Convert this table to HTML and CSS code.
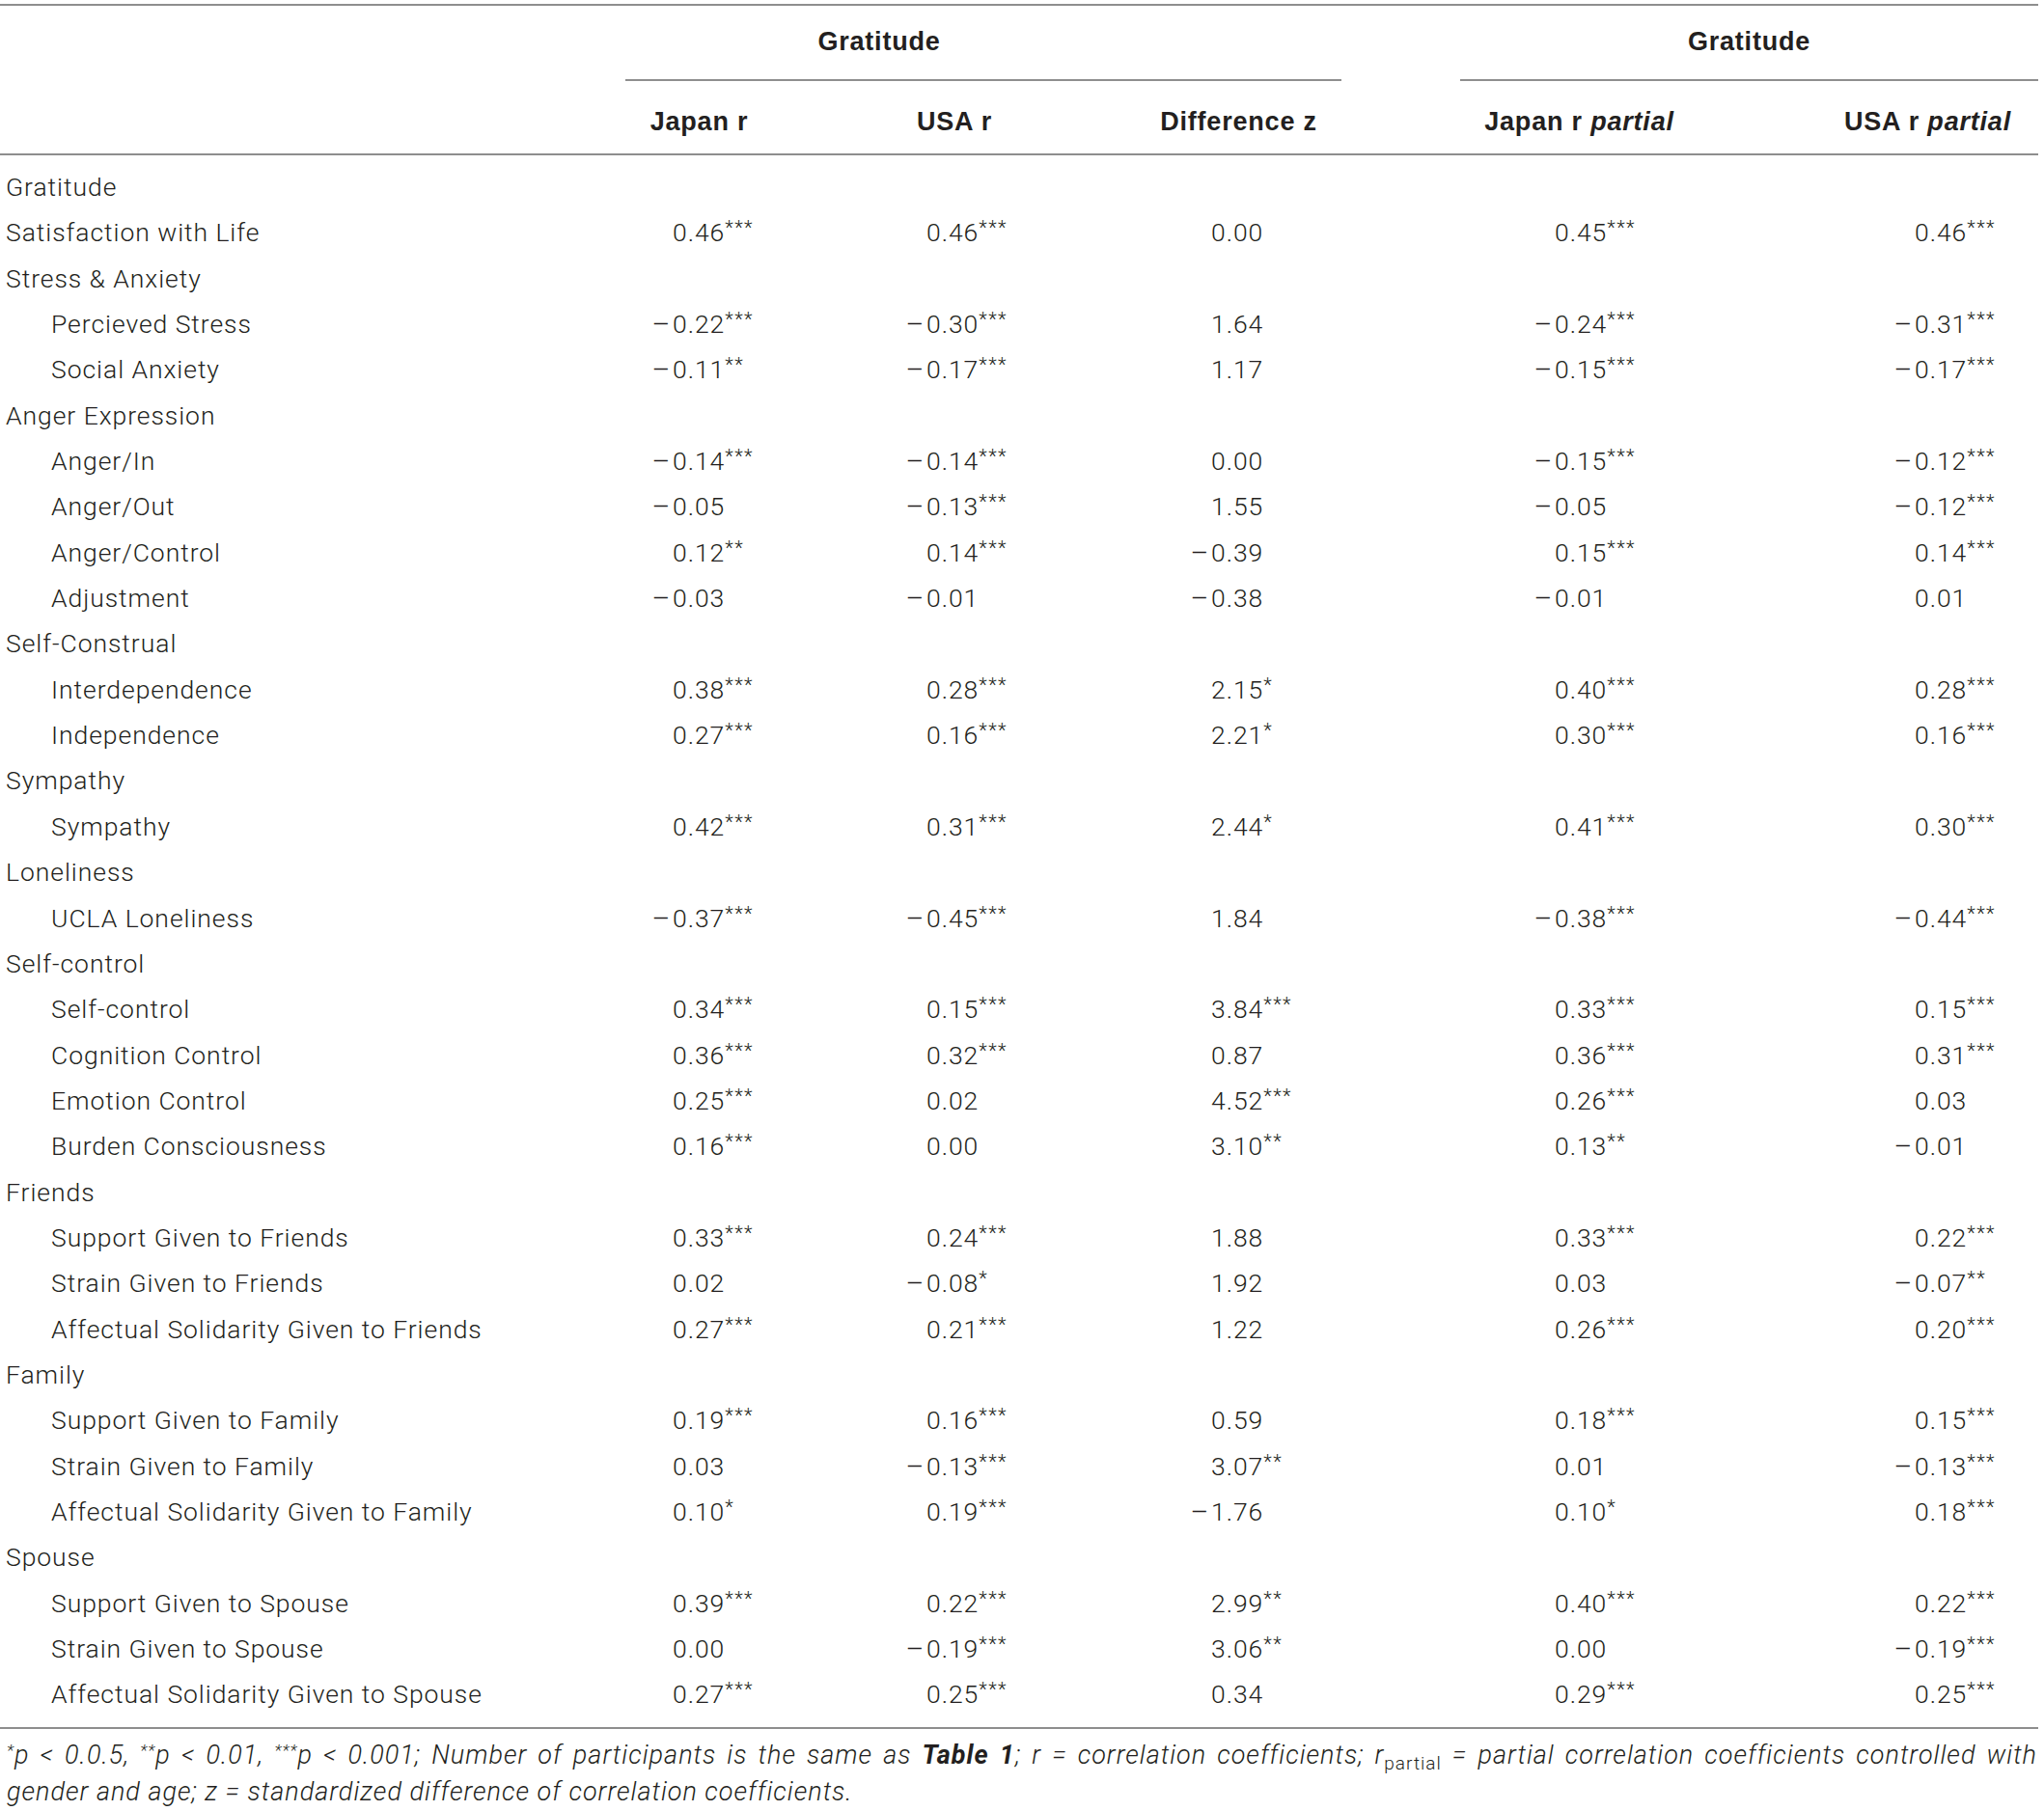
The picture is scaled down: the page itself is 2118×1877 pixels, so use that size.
FILE: index.html
```html
<!DOCTYPE html>
<html lang="en">
<head>
<meta charset="utf-8">
<title>Gratitude correlations</title>
<link rel="stylesheet" href="styles.css">
</head>
<body>
<div class="wrap">
<table class="tbl">
<colgroup>
<col class="c1"><col class="c2"><col class="c3"><col class="c4"><col class="c5"><col class="c6">
</colgroup>
<thead>
<tr class="hg">
<th></th>
<th colspan="3"><div class="gl g1">Gratitude</div></th>
<th colspan="2"><div class="gl g2">Gratitude</div></th>
</tr>
<tr class="hc">
<th></th>
<th>Japan r</th>
<th>USA r</th>
<th>Difference z</th>
<th>Japan r <i>partial</i></th>
<th>USA r <i>partial</i></th>
</tr>
</thead>
<tbody>
<tr class="first"><td class="lab">Gratitude</td><td></td><td></td><td></td><td></td><td></td></tr>
<tr><td class="lab">Satisfaction with Life</td><td><span class="m"></span>0.46<sup>***</sup></td><td><span class="m"></span>0.46<sup>***</sup></td><td><span class="m"></span>0.00</td><td><span class="m"></span>0.45<sup>***</sup></td><td><span class="m"></span>0.46<sup>***</sup></td></tr>
<tr><td class="lab">Stress &amp; Anxiety</td><td></td><td></td><td></td><td></td><td></td></tr>
<tr><td class="lab sub">Percieved Stress</td><td><span class="m">−</span>0.22<sup>***</sup></td><td><span class="m">−</span>0.30<sup>***</sup></td><td><span class="m"></span>1.64</td><td><span class="m">−</span>0.24<sup>***</sup></td><td><span class="m">−</span>0.31<sup>***</sup></td></tr>
<tr><td class="lab sub">Social Anxiety</td><td><span class="m">−</span>0.11<sup>**</sup></td><td><span class="m">−</span>0.17<sup>***</sup></td><td><span class="m"></span>1.17</td><td><span class="m">−</span>0.15<sup>***</sup></td><td><span class="m">−</span>0.17<sup>***</sup></td></tr>
<tr><td class="lab">Anger Expression</td><td></td><td></td><td></td><td></td><td></td></tr>
<tr><td class="lab sub">Anger/In</td><td><span class="m">−</span>0.14<sup>***</sup></td><td><span class="m">−</span>0.14<sup>***</sup></td><td><span class="m"></span>0.00</td><td><span class="m">−</span>0.15<sup>***</sup></td><td><span class="m">−</span>0.12<sup>***</sup></td></tr>
<tr><td class="lab sub">Anger/Out</td><td><span class="m">−</span>0.05</td><td><span class="m">−</span>0.13<sup>***</sup></td><td><span class="m"></span>1.55</td><td><span class="m">−</span>0.05</td><td><span class="m">−</span>0.12<sup>***</sup></td></tr>
<tr><td class="lab sub">Anger/Control</td><td><span class="m"></span>0.12<sup>**</sup></td><td><span class="m"></span>0.14<sup>***</sup></td><td><span class="m">−</span>0.39</td><td><span class="m"></span>0.15<sup>***</sup></td><td><span class="m"></span>0.14<sup>***</sup></td></tr>
<tr><td class="lab sub">Adjustment</td><td><span class="m">−</span>0.03</td><td><span class="m">−</span>0.01</td><td><span class="m">−</span>0.38</td><td><span class="m">−</span>0.01</td><td><span class="m"></span>0.01</td></tr>
<tr><td class="lab">Self-Construal</td><td></td><td></td><td></td><td></td><td></td></tr>
<tr><td class="lab sub">Interdependence</td><td><span class="m"></span>0.38<sup>***</sup></td><td><span class="m"></span>0.28<sup>***</sup></td><td><span class="m"></span>2.15<sup>*</sup></td><td><span class="m"></span>0.40<sup>***</sup></td><td><span class="m"></span>0.28<sup>***</sup></td></tr>
<tr><td class="lab sub">Independence</td><td><span class="m"></span>0.27<sup>***</sup></td><td><span class="m"></span>0.16<sup>***</sup></td><td><span class="m"></span>2.21<sup>*</sup></td><td><span class="m"></span>0.30<sup>***</sup></td><td><span class="m"></span>0.16<sup>***</sup></td></tr>
<tr><td class="lab">Sympathy</td><td></td><td></td><td></td><td></td><td></td></tr>
<tr><td class="lab sub">Sympathy</td><td><span class="m"></span>0.42<sup>***</sup></td><td><span class="m"></span>0.31<sup>***</sup></td><td><span class="m"></span>2.44<sup>*</sup></td><td><span class="m"></span>0.41<sup>***</sup></td><td><span class="m"></span>0.30<sup>***</sup></td></tr>
<tr><td class="lab">Loneliness</td><td></td><td></td><td></td><td></td><td></td></tr>
<tr><td class="lab sub">UCLA Loneliness</td><td><span class="m">−</span>0.37<sup>***</sup></td><td><span class="m">−</span>0.45<sup>***</sup></td><td><span class="m"></span>1.84</td><td><span class="m">−</span>0.38<sup>***</sup></td><td><span class="m">−</span>0.44<sup>***</sup></td></tr>
<tr><td class="lab">Self-control</td><td></td><td></td><td></td><td></td><td></td></tr>
<tr><td class="lab sub">Self-control</td><td><span class="m"></span>0.34<sup>***</sup></td><td><span class="m"></span>0.15<sup>***</sup></td><td><span class="m"></span>3.84<sup>***</sup></td><td><span class="m"></span>0.33<sup>***</sup></td><td><span class="m"></span>0.15<sup>***</sup></td></tr>
<tr><td class="lab sub">Cognition Control</td><td><span class="m"></span>0.36<sup>***</sup></td><td><span class="m"></span>0.32<sup>***</sup></td><td><span class="m"></span>0.87</td><td><span class="m"></span>0.36<sup>***</sup></td><td><span class="m"></span>0.31<sup>***</sup></td></tr>
<tr><td class="lab sub">Emotion Control</td><td><span class="m"></span>0.25<sup>***</sup></td><td><span class="m"></span>0.02</td><td><span class="m"></span>4.52<sup>***</sup></td><td><span class="m"></span>0.26<sup>***</sup></td><td><span class="m"></span>0.03</td></tr>
<tr><td class="lab sub">Burden Consciousness</td><td><span class="m"></span>0.16<sup>***</sup></td><td><span class="m"></span>0.00</td><td><span class="m"></span>3.10<sup>**</sup></td><td><span class="m"></span>0.13<sup>**</sup></td><td><span class="m">−</span>0.01</td></tr>
<tr><td class="lab">Friends</td><td></td><td></td><td></td><td></td><td></td></tr>
<tr><td class="lab sub">Support Given to Friends</td><td><span class="m"></span>0.33<sup>***</sup></td><td><span class="m"></span>0.24<sup>***</sup></td><td><span class="m"></span>1.88</td><td><span class="m"></span>0.33<sup>***</sup></td><td><span class="m"></span>0.22<sup>***</sup></td></tr>
<tr><td class="lab sub">Strain Given to Friends</td><td><span class="m"></span>0.02</td><td><span class="m">−</span>0.08<sup>*</sup></td><td><span class="m"></span>1.92</td><td><span class="m"></span>0.03</td><td><span class="m">−</span>0.07<sup>**</sup></td></tr>
<tr><td class="lab sub">Affectual Solidarity Given to Friends</td><td><span class="m"></span>0.27<sup>***</sup></td><td><span class="m"></span>0.21<sup>***</sup></td><td><span class="m"></span>1.22</td><td><span class="m"></span>0.26<sup>***</sup></td><td><span class="m"></span>0.20<sup>***</sup></td></tr>
<tr><td class="lab">Family</td><td></td><td></td><td></td><td></td><td></td></tr>
<tr><td class="lab sub">Support Given to Family</td><td><span class="m"></span>0.19<sup>***</sup></td><td><span class="m"></span>0.16<sup>***</sup></td><td><span class="m"></span>0.59</td><td><span class="m"></span>0.18<sup>***</sup></td><td><span class="m"></span>0.15<sup>***</sup></td></tr>
<tr><td class="lab sub">Strain Given to Family</td><td><span class="m"></span>0.03</td><td><span class="m">−</span>0.13<sup>***</sup></td><td><span class="m"></span>3.07<sup>**</sup></td><td><span class="m"></span>0.01</td><td><span class="m">−</span>0.13<sup>***</sup></td></tr>
<tr><td class="lab sub">Affectual Solidarity Given to Family</td><td><span class="m"></span>0.10<sup>*</sup></td><td><span class="m"></span>0.19<sup>***</sup></td><td><span class="m">−</span>1.76</td><td><span class="m"></span>0.10<sup>*</sup></td><td><span class="m"></span>0.18<sup>***</sup></td></tr>
<tr><td class="lab">Spouse</td><td></td><td></td><td></td><td></td><td></td></tr>
<tr><td class="lab sub">Support Given to Spouse</td><td><span class="m"></span>0.39<sup>***</sup></td><td><span class="m"></span>0.22<sup>***</sup></td><td><span class="m"></span>2.99<sup>**</sup></td><td><span class="m"></span>0.40<sup>***</sup></td><td><span class="m"></span>0.22<sup>***</sup></td></tr>
<tr><td class="lab sub">Strain Given to Spouse</td><td><span class="m"></span>0.00</td><td><span class="m">−</span>0.19<sup>***</sup></td><td><span class="m"></span>3.06<sup>**</sup></td><td><span class="m"></span>0.00</td><td><span class="m">−</span>0.19<sup>***</sup></td></tr>
<tr class="last"><td class="lab sub">Affectual Solidarity Given to Spouse</td><td><span class="m"></span>0.27<sup>***</sup></td><td><span class="m"></span>0.25<sup>***</sup></td><td><span class="m"></span>0.34</td><td><span class="m"></span>0.29<sup>***</sup></td><td><span class="m"></span>0.25<sup>***</sup></td></tr>
</tbody>
</table>
<div class="fn">
<span class="l1"><sup>*</sup>p &lt; 0.0.5, <sup>**</sup>p &lt; 0.01, <sup>***</sup>p &lt; 0.001; Number of participants is the same as <b>Table 1</b>; r = correlation coefficients; r<sub>partial</sub> = partial correlation coefficients controlled with</span>
<span class="l2">gender and age; z = standardized difference of correlation coefficients.</span>
</div>
</div>
</body>
</html>
```
FILE: styles.css
```css
html, body {
  margin: 0;
  padding: 0;
  background: #ffffff;
}

.wrap {
  width: 2112px;
  padding-top: 4px;
  color: #231f20;
  font-family: Roboto, "Liberation Sans", Arial, sans-serif;
  font-weight: 300;
}

.tbl {
  width: 2112px;
  table-layout: fixed;
  border-collapse: collapse;
  border-spacing: 0;
  border-top: 2px solid #8e8e8e;
  border-bottom: 2px solid #8e8e8e;
}

.c1 { width: 648px; }
.c2 { width: 153px; }
.c3 { width: 376px; }
.c4 { width: 213px; }
.c5 { width: 493px; }
.c6 { width: 229px; }

.tbl th {
  padding: 0;
  font-family: "Liberation Sans", Arial, sans-serif;
  font-weight: 700;
  font-size: 27px;
  letter-spacing: 0.8px;
  line-height: 30px;
  text-align: center;
  white-space: nowrap;
}

.tbl th i {
  font-style: italic;
}

.gl {
  padding-top: 22px;
  padding-bottom: 24px;
  border-bottom: 2px solid #8e8e8e;
}

.g1 {
  padding-right: 216px;
}

.g2 {
  margin-left: 123px;
}

.hc th {
  padding-top: 27px;
  padding-bottom: 18px;
  border-bottom: 2px solid #8e8e8e;
}

.tbl td {
  padding: 0;
  height: 47.35px;
  font-size: 26.5px;
  letter-spacing: 0.95px;
  line-height: 47.35px;
  white-space: nowrap;
  text-align: left;
  vertical-align: top;
}

.tbl tr.first td {
  padding-top: 9px;
}

.tbl tr.last td {
  padding-bottom: 10px;
}

.tbl td.lab {
  padding-left: 6px;
}

.tbl td.lab.sub {
  padding-left: 53px;
}

.tbl td:nth-child(2) { padding-left: 27px; }
.tbl td:nth-child(3) { padding-left: 137px; }
.tbl td:nth-child(4) { padding-left: 56px; }
.tbl td:nth-child(5) { padding-left: 199px; }
.tbl td:nth-child(6) { padding-left: 79px; }

.m {
  display: inline-block;
  width: 22px;
  letter-spacing: 0;
  transform: scaleX(1.3);
  transform-origin: 0 50%;
}

.tbl td sup {
  font-size: 20px;
  line-height: 0;
  vertical-align: 7px;
  letter-spacing: 1.4px;
}

.fn {
  padding-top: 8px;
  padding-left: 7px;
  width: 2104px;
  font-style: italic;
  font-size: 27px;
  line-height: 38px;
  letter-spacing: 1px;
}

.fn .l1 {
  display: block;
  text-align: justify;
  text-align-last: justify;
  white-space: nowrap;
}

.fn .l2 {
  display: block;
}

.fn sup {
  font-size: 17px;
  line-height: 0;
  vertical-align: 8px;
}

.fn sub {
  font-style: normal;
  font-size: 19px;
  line-height: 0;
  vertical-align: -6px;
}

.fn b {
  font-weight: 700;
}
```
